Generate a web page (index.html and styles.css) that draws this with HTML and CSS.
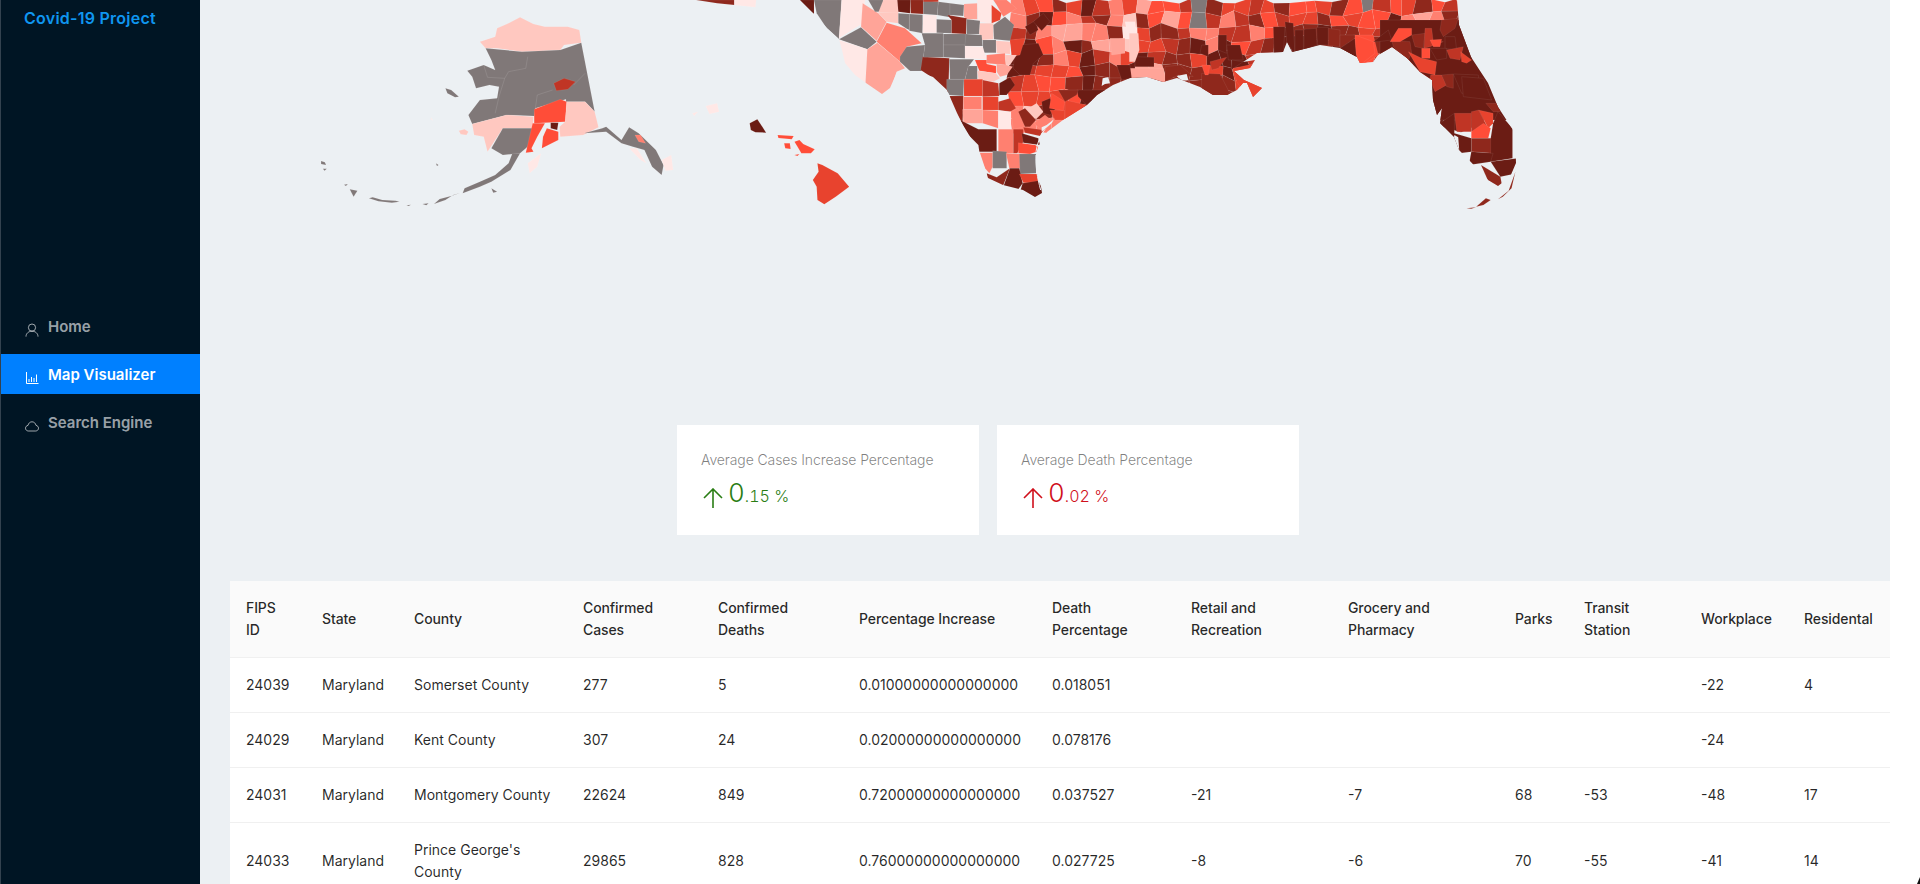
FILE: index.html
```html
<!DOCTYPE html>
<html lang="en">
<head>
<meta charset="utf-8">
<title>Covid-19 Project</title>
<link rel="stylesheet" href="styles.css">
</head>
<body>
<div class="app">
  <aside class="sidebar">
    <div class="logo">Covid-19 Project</div>
    <nav class="menu">
      <a class="menu-item">
        <svg class="menu-icon" viewBox="0 0 14 14"><circle cx="7" cy="4.6" r="3.6"/><path d="M1 13.6C1 10.4 3.6 8.2 7 8.2s6 2.2 6 5.4"/></svg>
        <span>Home</span>
      </a>
      <a class="menu-item active">
        <svg class="menu-icon" viewBox="0 0 14 14"><path d="M1.5 1v11.5H13.500"/><path d="M4 11V8M6.500 11V6M9 11V7M11.500 11V3.500"/></svg>
        <span>Map Visualizer</span>
      </a>
      <a class="menu-item">
        <svg class="menu-icon" viewBox="0 0 14 14"><path d="M3.500 12C1.800 12 .5 10.800.5 9.200.5 7.700 1.600 6.600 3 6.400 3.500 4.200 5 2.800 7 2.800s3.500 1.400 4 3.600c1.400.2 2.500 1.300 2.500 2.800 0 1.600-1.300 2.800-3 2.800z"/></svg>
        <span>Search Engine</span>
      </a>
    </nav>
  </aside>

  <main class="main">
    <svg class="map" viewBox="200 0 1690 424" aria-label="US county map">
      <defs>
        <clipPath id="us-clip">
          <polygon points="800,0 813,13 827,28 839,39 842,50 845,63 855,75 866,83 882,94 890,88 897,72 905,70 922,73 933,77 947,90 950,97 957,113 963,125 978,150 980,153 985,168 988,178 1003,185 1023,190 1035,197 1042,193 1040,180 1036,160 1038,147 1047,132 1063,120 1087,105 1097,95 1113,85 1130,78 1147,77 1163,82 1177,78 1187,82 1200,87 1213,95 1227,95 1237,90 1243,83 1247,83 1253,97 1262,88 1244,80 1234,71 1250,68 1255,60 1243,62 1257,53 1283,52 1287,42 1292,52 1320,45 1340,48 1357,57 1360,63 1373,62 1378,55 1392,47 1407,58 1420,72 1432,80 1433,100 1437,115 1442,108 1440,123 1454,137 1459,150 1469,160 1488,180 1498,186 1510,177 1516,163 1515,133 1498,107 1488,83 1471,57 1459,25 1457,0"/>
        </clipPath>
      </defs>

      <g class="counties" clip-path="url(#us-clip)">
        <g id="county-grid"></g>

        <g transform="translate(790 0) scale(.3333)">
          <polygon class="s-j" points="20,0 72,0 72,42 55,30"/>
          <polygon class="s-g" points="72,0 155,0 147,118 110,85 80,40"/>
          <polygon class="s-a" points="155,0 225,0 218,70 147,115"/>
          <polygon class="s-g" points="147,118 213,82 260,125 232,148"/>
          <polygon class="s-c" points="218,10 265,40 290,65 260,122 213,80"/>
          <polygon class="s-b" points="265,38 325,35 325,70 290,65"/>
          <polygon class="s-d" points="260,125 290,68 345,85 395,130 350,140 345,165 330,185"/>
          <polygon class="s-a" points="140,118 232,148 225,265 195,235 155,195"/>
          <polygon class="s-c" points="232,148 262,128 330,185 345,205 320,215 300,275 275,293 226,255"/>
          <polygon class="s-g" points="330,170 350,140 405,135 395,213 360,213 330,185"/>
          <polygon class="s-i" points="398,170 478,175 475,280 430,235 392,210"/>
          <polygon class="s-g" points="235,0 280,0 280,35 255,35"/>
          <polygon class="s-b" points="280,0 325,0 325,38 265,38"/>
          <polygon class="s-j" points="322,0 362,0 360,40 325,35"/>
          <polygon class="s-i" points="362,0 400,0 400,42 362,40"/>
          <polygon class="s-g" points="400,0 445,5 442,45 400,42"/>
          <polygon class="s-g" points="445,5 480,10 480,52 442,45"/>
          <polygon class="s-g" points="480,10 522,15 520,48 480,45"/>
          <polygon class="s-c" points="522,12 562,10 562,58 530,58 522,50"/>
          <polygon class="s-a" points="562,0 610,0 600,70 565,65"/>
          <polygon class="s-f" points="605,15 635,40 630,60 605,70"/>
          <polygon class="s-d" points="610,0 650,0 680,25 640,50 620,15"/>
          <polygon class="s-h" points="400,0 445,0 445,5 400,5"/>
          <polygon class="s-g" points="325,40 358,42 358,90 348,85 325,70"/>
          <polygon class="s-g" points="358,42 398,44 398,100 358,92"/>
          <polygon class="s-a" points="400,44 440,46 440,98 398,98"/>
          <polygon class="s-g" points="440,58 485,60 485,100 440,98"/>
          <polygon class="s-i" points="472,45 530,55 528,102 485,100 485,60"/>
          <polygon class="s-g" points="530,58 570,62 568,102 530,102"/>
          <polygon class="s-b" points="570,70 610,70 610,118 575,120 568,100"/>
          <polygon class="s-g" points="610,75 645,50 672,75 660,122 612,118"/>
          <polygon class="s-g" points="395,100 460,100 460,172 400,172 405,135"/>
          <polygon class="s-g" points="460,102 528,102 528,135 460,135"/>
          <polygon class="s-g" points="460,135 525,135 525,175 460,172"/>
          <polygon class="s-g" points="528,102 575,105 578,138 525,138"/>
          <polygon class="s-g" points="578,120 618,120 618,158 580,158"/>
          <polygon class="s-a" points="525,138 578,140 590,178 525,175"/>
          <polygon class="s-b" points="618,122 660,125 660,162 620,160"/>
          <polygon class="s-d" points="590,165 645,160 648,195 590,190"/>
          <polygon class="s-e" points="555,180 590,180 590,192 618,198 618,220 568,212"/>
          <polygon class="s-c" points="620,192 650,195 668,200 650,225 630,230 620,215"/>
          <polygon class="s-g" points="478,178 552,178 535,200 525,238 480,238"/>
          <polygon class="s-g" points="535,198 562,198 562,238 525,238"/>
          <polygon class="s-b" points="562,212 618,220 630,235 610,245 565,238"/>
          <polygon class="s-g" points="470,238 522,238 520,288 478,285 470,270"/>
          <polygon class="s-f" points="522,238 578,238 578,288 522,288"/>
          <polygon class="s-h" points="578,240 625,250 628,288 578,290"/>
          <polygon class="s-i" points="478,288 520,288 518,370 495,340"/>
          <polygon class="s-j" points="628,250 660,232 675,255 650,285 628,285"/>
          <polygon class="s-j" points="690,135 745,130 760,165 730,190 720,225 690,225 670,205 672,180"/>
          <polygon class="s-f" points="660,120 705,115 690,165 665,170"/>
          <polygon class="s-b" points="645,165 680,165 660,195 648,195"/>
          <polygon class="s-j" points="705,80 735,62 745,90 720,105"/>
          <polygon class="s-j" points="730,65 760,40 780,65 755,92"/>
        </g>

        <g transform="translate(930 90) scale(.3333)">
          <polygon class="s-d" points="100,20 155,20 155,58 100,58"/>
          <polygon class="s-f" points="158,20 205,20 205,60 158,60"/>
          <polygon class="s-h" points="205,35 240,25 258,55 240,65 205,60"/>
          <polygon class="s-c" points="98,58 158,58 158,100 100,100"/>
          <polygon class="s-d" points="158,60 205,62 205,115 158,100"/>
          <polygon class="s-a" points="205,62 243,65 243,118 205,118"/>
          <polygon class="s-d" points="243,65 265,55 285,110 250,118"/>
          <polygon class="s-j" points="90,90 145,118 200,118 200,185 148,185 145,165 110,130"/>
          <polygon class="s-d" points="205,118 250,118 250,190 205,190"/>
          <polygon class="s-h" points="250,118 280,118 280,155 262,190 250,190"/>
          <polygon class="s-i" points="265,65 285,55 318,90 300,110 285,110"/>
          <polygon class="s-b" points="295,55 320,40 340,65 318,88"/>
          <polygon class="s-d" points="312,100 345,75 370,95 340,125"/>
          <polygon class="s-h" points="280,112 340,120 330,138 285,128"/>
          <polygon class="s-j" points="275,130 325,145 330,165 280,158"/>
          <polygon class="s-e" points="265,158 315,165 325,170 320,185 300,192 265,190"/>
          <polygon class="s-d" points="140,188 188,188 188,230 178,250 165,235"/>
          <polygon class="s-g" points="188,182 230,185 230,235 188,235"/>
          <polygon class="s-d" points="228,190 270,192 270,235 238,235"/>
          <polygon class="s-g" points="268,192 318,192 318,250 270,252"/>
          <polygon class="s-i" points="170,250 200,262 240,235 218,290 170,275"/>
          <polygon class="s-j" points="240,235 268,235 278,280 265,298 220,290"/>
          <polygon class="s-f" points="268,252 322,252 325,280 280,278"/>
          <polygon class="s-j" points="278,280 325,272 345,312 315,330 270,305"/>
          <polygon class="s-j" points="335,35 360,25 378,55 360,75 340,70"/>
          <polygon class="s-f" points="360,60 405,62 402,90 375,90"/>
          <polygon class="s-f" points="405,30 470,45 405,100"/>
          <polygon class="s-e" points="365,10 405,35 400,62 358,55"/>
          <polygon class="s-j" points="440,0 530,0 470,45 445,20"/>
          <polygon class="s-i" points="385,0 445,0 440,15 405,35"/>
          <path class="lagoon" d="M318 195C316 225 322 265 332 300"/>
          <path class="lagoon" d="M345 118C330 135 322 160 318 185"/>
          <polygon class="water" points="335,125 365,100 372,88 350,105 335,112"/>
        </g>

        <g transform="translate(1080 0) scale(.3333)">
          <polygon class="s-c" points="150,205 250,205 260,250 205,232 150,235"/>
          <polygon class="s-j" points="165,170 222,172 222,200 165,200"/>
          <polygon class="s-j" points="110,195 150,195 155,235 125,240"/>
          <polygon class="s-c" points="90,115 135,115 135,160 95,165"/>
          <polygon class="s-a" points="135,65 165,65 170,105 145,115"/>
          <polygon class="s-b" points="148,100 175,100 178,150 165,185 148,185"/>
          <polygon class="s-i" points="365,220 420,222 460,300 400,295 365,265"/>
          <polygon class="s-i" points="255,200 300,195 340,230 295,225 255,245"/>
          <polygon class="s-j" points="415,105 440,105 440,160 415,150"/>
          <polygon class="s-j" points="440,135 480,135 490,180 445,180"/>
          <polygon class="s-j" points="455,180 490,185 460,205 455,210"/>
          <polygon class="s-j" points="365,135 385,135 385,170 360,160"/>
          <polygon class="s-e" points="365,195 390,195 385,225 375,225"/>
          <polygon class="s-h" points="390,185 440,172 415,205 395,210"/>
          <polygon class="s-f" points="460,205 530,190 525,220 560,270 510,300 470,245"/>
          <polygon class="s-j" points="580,80 615,80 610,165 582,160"/>
          <polygon class="s-j" points="615,65 640,70 645,165 620,125"/>
          <polygon class="s-j" points="645,90 670,90 670,150 645,165"/>
          <polygon class="s-j" points="672,88 708,85 712,135 672,150"/>
          <polygon class="s-j" points="710,82 745,82 745,135 712,135"/>
          <polygon class="s-i" points="745,85 780,90 780,140 745,137"/>
          <polygon class="s-j" points="780,130 830,125 830,175 780,140"/>
          <polygon class="s-e" points="820,105 880,105 895,165 840,200 830,170"/>
          <polygon class="water" points="65,258 68,235 85,232 90,250 75,252"/>
          <polygon class="water" points="290,228 320,222 325,240 305,242"/>
        </g>

        <g transform="translate(1340 0) scale(.3333)">
          <rect class="s-j" x="120" y="60" width="390" height="300"/>
          <polygon class="s-i" points="0,105 45,105 45,115 0,145"/>
          <polygon class="s-j" points="0,145 45,115 50,170 25,170"/>
          <polygon class="s-e" points="45,105 100,125 105,160 60,195 48,160"/>
          <polygon class="s-j" points="100,125 145,90 155,120 115,125"/>
          <polygon class="s-i" points="155,120 210,125 215,160 205,180 160,140"/>
          <polygon class="s-e" points="150,125 175,85 215,85 215,105 180,125"/>
          <polygon class="s-i" points="215,105 255,100 250,145 225,140"/>
          <polygon class="s-h" points="255,85 275,85 280,125 310,125 270,140 252,145"/>
          <polygon class="s-e" points="270,120 305,118 300,140 280,140"/>
          <polygon class="s-i" points="305,60 355,55 345,85 310,110 300,90"/>
          <polygon class="s-j" points="315,110 345,110 350,150 315,145"/>
          <polygon class="s-j" points="270,145 320,145 320,175 290,180"/>
          <polygon class="s-e" points="245,145 270,145 270,175 245,175"/>
          <polygon class="s-f" points="205,155 245,175 270,180 290,185 285,225 240,215"/>
          <polygon class="s-h" points="320,150 370,140 360,180 330,175"/>
          <polygon class="s-f" points="362,155 395,180 380,190 365,185"/>
          <polygon class="s-h" points="272,225 305,225 320,255 285,275 270,240"/>
          <polygon class="s-i" points="305,225 340,222 340,265 320,260"/>
          <polygon class="s-j" points="340,222 415,225 420,275 365,280"/>
          <polygon class="s-j" points="365,230 430,235 455,300 370,290"/>
        </g>

        <g transform="translate(800 0) scale(.4847 .3333)">
          <polygon class="s-h" points="1350,340 1385,340 1385,395 1355,395"/>
          <polygon class="s-h" points="1385,335 1400,330 1420,385 1385,395"/>
          <polygon class="s-f" points="1400,330 1430,340 1430,370 1420,385"/>
          <polygon class="s-e" points="1385,395 1410,370 1425,385 1420,415 1385,415"/>
          <polygon class="s-i" points="1385,415 1430,415 1430,460 1385,455"/>
          <polygon class="s-i" points="1415,310 1445,310 1445,335 1430,335"/>
          <polygon class="s-j" points="1440,335 1470,385 1470,475 1425,485 1425,415 1430,370"/>
          <polygon class="s-j" points="1320,370 1350,340 1350,400 1385,415 1385,455 1360,460"/>
          <polygon class="s-j" points="1385,455 1430,460 1425,485 1380,495"/>
          <polygon class="s-i" points="1405,495 1445,530 1450,570 1425,560"/>
          <polygon class="s-j" points="1425,485 1480,475 1480,520 1445,530"/>
          <polygon class="water" points="1350,405 1358,412 1360,450 1348,425"/>
        </g>
      </g>

      <g class="islands" transform="translate(800 0) scale(.4847 .3333)">
        <polygon class="s-i" points="1395,620 1415,595 1425,600 1410,615"/>
        <polygon class="s-i" points="1375,625 1395,622 1385,626"/>
        <polygon class="s-i" points="1440,598 1462,572 1476,515 1468,565 1450,590"/>
      </g>
      <g class="islands" transform="translate(300 0) scale(.3827 .3333)">
        <polygon class="s-i" points="1035,0 1135,0 1135,15 1090,10"/>
        <polygon class="s-a" points="1135,0 1192,0 1190,22 1135,15"/>
        <polygon class="s-b" points="470,125 510,110 515,85 545,70 575,52 610,72 640,80 700,80 730,90 735,128 690,135 680,150 580,155 515,145 485,145"/>
        <polygon class="s-g" points="485,145 580,155 680,150 735,128 770,335 745,305 695,305 695,298 615,325 612,348 540,345 450,372 440,345 470,300 515,295 520,260 495,255 460,265 450,230 437,212 480,195 510,210 500,180"/>
        <polyline class="border" points="480,195 490,232 535,235 520,290 510,340"/>
        <polyline class="border" points="535,235 545,215 590,205 595,170"/>
        <polyline class="border" points="615,325 620,285 660,270"/>
        <polyline class="border" points="715,255 745,220"/>
        <polygon class="s-h" points="663,250 690,235 720,245 700,268 670,272"/>
        <polygon class="s-e" points="612,328 680,298 697,305 693,365 612,370"/>
        <polygon class="s-b" points="697,305 745,305 770,335 780,382 740,405 680,410 678,380 693,365"/>
        <polygon class="s-b" points="450,372 540,345 610,350 608,385 530,385 490,455 480,410 455,405"/>
        <polygon class="s-g" points="530,385 608,385 600,435 575,460 530,465 500,445"/>
        <polygon class="s-e" points="608,370 640,370 620,410 605,445 610,455 590,458"/>
        <polygon class="s-e" points="645,385 675,395 675,420 632,445 635,410"/>
        <polygon class="s-j" points="655,368 675,368 672,390 655,385"/>
        <polygon class="s-a" points="595,490 630,460 620,500 600,520"/>
        <polygon class="s-g" points="575,460 550,510 500,545 470,560 425,580 430,565 470,545 510,525 545,490 555,460"/>
        <polygon class="s-g" points="380,265 395,270 415,290 405,292 385,280"/>
        <polygon class="s-b" points="415,392 430,388 440,395 435,405 420,403"/>
        <polygon class="s-a" points="342,352 348,362 342,358"/>
        <polygon class="s-g" points="420,578 400,585 380,600 350,612 365,597 395,588"/>
        <polygon class="s-g" points="260,605 240,608 205,604 180,595 190,592 215,600 250,602"/>
        <polygon class="s-g" points="55,483 65,487 68,495 55,492"/>
        <polygon class="s-g" points="60,506 70,506 64,512"/>
        <polygon class="s-g" points="115,554 125,552 120,558"/>
        <polygon class="s-g" points="130,568 150,572 140,590"/>
        <polygon class="s-g" points="278,616 290,614 284,618"/>
        <polygon class="s-g" points="320,612 336,610 330,616"/>
        <polygon class="s-g" points="500,565 515,575 505,578"/>
        <polygon class="s-g" points="355,490 362,495 358,498"/>
        <polygon class="s-g" points="742,400 790,385 800,380 810,390 840,420 860,382 885,400 930,450 950,495 945,525 920,500 900,450 870,440 840,430 800,395"/>
        <polygon class="s-d" points="875,405 890,405 903,430 885,425"/>
        <polygon class="s-a" points="860,445 880,445 905,490 890,480"/>
        <polygon class="s-a" points="945,480 970,465 975,510 955,512"/>
        <polygon class="s-a" points="1060,318 1090,310 1095,335 1070,342"/>
        <polygon class="s-a" points="1025,340 1040,335 1030,348"/>
        <polygon class="s-j" points="1175,370 1195,358 1205,375 1218,398 1190,397 1178,390"/>
        <polygon class="s-e" points="1248,405 1290,408 1285,418 1250,414"/>
        <polygon class="s-e" points="1265,430 1280,430 1282,447 1268,445"/>
        <polygon class="s-e" points="1292,425 1305,420 1315,432 1345,448 1335,460 1310,460 1300,440"/>
        <polygon class="s-e" points="1292,465 1305,462 1300,468"/>
        <polygon class="s-f" points="1352,490 1365,495 1405,520 1435,560 1400,590 1370,613 1352,600 1350,560 1340,540 1355,515"/>
      </g>
    </svg>

    <section class="stats">
      <div class="stat-card">
        <div class="stat-title">Average Cases Increase Percentage</div>
        <div class="stat-value up">
          <svg class="stat-arrow" viewBox="0 0 20 20"><path d="M10 20V1M1 10l9-9 9 9"/></svg>
          <span class="stat-int">0</span><span class="stat-dec">.15 %</span>
        </div>
      </div>
      <div class="stat-card">
        <div class="stat-title">Average Death Percentage</div>
        <div class="stat-value down">
          <svg class="stat-arrow" viewBox="0 0 20 20"><path d="M10 20V1M1 10l9-9 9 9"/></svg>
          <span class="stat-int">0</span><span class="stat-dec">.02 %</span>
        </div>
      </div>
    </section>

    <table class="data-table">
      <colgroup>
        <col class="w76"><col class="w92"><col class="w169"><col class="w135"><col class="w141"><col class="w193"><col class="w139"><col class="w157"><col class="w167"><col class="w69"><col class="w117"><col class="w103"><col class="w102">
      </colgroup>
      <thead>
        <tr>
          <th>FIPS ID</th><th>State</th><th>County</th><th>Confirmed Cases</th><th>Confirmed Deaths</th><th>Percentage Increase</th><th>Death Percentage</th><th>Retail and Recreation</th><th>Grocery and Pharmacy</th><th>Parks</th><th>Transit Station</th><th>Workplace</th><th>Residental</th>
        </tr>
      </thead>
      <tbody>
        <tr><td>24039</td><td>Maryland</td><td>Somerset County</td><td>277</td><td>5</td><td>0.01000000000000000</td><td>0.018051</td><td></td><td></td><td></td><td></td><td>-22</td><td>4</td></tr>
        <tr><td>24029</td><td>Maryland</td><td>Kent County</td><td>307</td><td>24</td><td>0.02000000000000000</td><td>0.078176</td><td></td><td></td><td></td><td></td><td>-24</td><td></td></tr>
        <tr><td>24031</td><td>Maryland</td><td>Montgomery County</td><td>22624</td><td>849</td><td>0.72000000000000000</td><td>0.037527</td><td>-21</td><td>-7</td><td>68</td><td>-53</td><td>-48</td><td>17</td></tr>
        <tr><td>24033</td><td>Maryland</td><td>Prince George's County</td><td>29865</td><td>828</td><td>0.76000000000000000</td><td>0.027725</td><td>-8</td><td>-6</td><td>70</td><td>-55</td><td>-41</td><td>14</td></tr>
      </tbody>
    </table>
  </main>
  <svg class="cursor-tip" viewBox="0 0 3 7"><polygon points="0,7 3,0 3,7"/></svg>
</div>
<script src="map.js"></script>
</body>
</html>
```

FILE: styles.css
```css
* { box-sizing: border-box; }

html, body {
  margin: 0;
  height: 884px;
  overflow: hidden;
  background: #fff;
  font-family: Inter, "Liberation Sans", sans-serif;
  font-size: 14px;
  line-height: 22px;
  color: rgba(0, 0, 0, .85);
}

.app {
  position: relative;
  display: flex;
  height: 884px;
  overflow: hidden;
}

/* Sidebar */
.sidebar {
  flex: 0 0 200px;
  background: #001524;
  border-left: 1px solid #33424f;
}

.logo {
  height: 36px;
  line-height: 36px;
  padding-left: 23px;
  margin-bottom: 270px;
  font-size: 16px;
  font-weight: 600;
  letter-spacing: .25px;
  color: #0f96f0;
}

.menu {
  display: flex;
  flex-direction: column;
  gap: 8px;
}

.menu-item {
  display: flex;
  align-items: center;
  gap: 9px;
  height: 40px;
  padding-left: 24px;
  font-size: 15px;
  font-weight: 600;
  line-height: 24px;
  color: rgba(255, 255, 255, .62);
}

.menu-item span {
  margin-top: 1px;
}

.menu-item.active {
  background: #0080ff;
  color: #fff;
}

.menu-icon {
  flex: 0 0 14px;
  width: 14px;
  height: 14px;
  margin-top: 8px;
  fill: none;
  stroke: currentColor;
  stroke-width: 1;
}

/* Main */
.main {
  flex: 0 0 1690px;
  background: #ecf0f3;
}

.map {
  display: block;
  width: 1690px;
  height: 424px;
}

.counties polygon,
.counties rect,
.islands polygon,
.county {
  stroke: #fff;
  stroke-opacity: .15;
  stroke-width: .5px;
  vector-effect: non-scaling-stroke;
}

.counties .water {
  fill: #ecf0f3;
  stroke: none;
}

.lagoon {
  fill: none;
  stroke: #ecf0f3;
  stroke-width: 1px;
  vector-effect: non-scaling-stroke;
}

.border {
  fill: none;
  stroke: #fff;
  stroke-opacity: .18;
  stroke-width: .6px;
  vector-effect: non-scaling-stroke;
}

.s-g { fill: #807878; }
.s-a { fill: #ffe8e6; }
.s-b { fill: #ffc8c0; }
.s-c { fill: #ffa498; }
.s-d { fill: #ff8070; }
.s-e { fill: #ff4d38; }
.s-f { fill: #e8432e; }
.s-h { fill: #c03525; }
.s-i { fill: #8f281c; }
.s-j { fill: #6b1c14; }

/* Statistic cards */
.stats {
  display: flex;
  gap: 18px;
  margin: 1px 0 46px 477px;
}

.stat-card {
  width: 302px;
  height: 110px;
  padding: 24px;
  background: #fff;
}

.stat-title {
  margin-bottom: 4px;
  color: rgba(0, 0, 0, .5);
  font-weight: 300;
  letter-spacing: -.1px;
}

.stat-value {
  display: flex;
  align-items: baseline;
  font-size: 16px;
  line-height: 36px;
  font-weight: 350;
  font-variant-numeric: tabular-nums;
}

.stat-value.up { color: #2a7d14; }
.stat-value.down { color: #d0101c; }

.stat-arrow {
  align-self: center;
  width: 20px;
  height: 20px;
  margin: 7px 5px 0 2px;
  fill: none;
  stroke: currentColor;
  stroke-width: 1.6;
}

.stat-int { font-size: 26px; }

/* Table */
.data-table {
  width: 1660px;
  margin-left: 30px;
  table-layout: fixed;
  border-collapse: collapse;
  background: #fff;
}

.data-table th,
.data-table td {
  padding: 16px;
  border-bottom: 1px solid #f0f0f0;
  text-align: left;
  vertical-align: middle;
}

.data-table th {
  background: #fafafa;
  font-weight: 450;
  letter-spacing: -.1px;
}

.w76 { width: 76px; }
.w92 { width: 92px; }
.w169 { width: 169px; }
.w135 { width: 135px; }
.w141 { width: 141px; }
.w193 { width: 193px; }
.w139 { width: 139px; }
.w157 { width: 157px; }
.w167 { width: 167px; }
.w69 { width: 69px; }
.w117 { width: 117px; }
.w102 { width: 102px; }
.w103 { width: 103px; }

.cursor-tip {
  position: absolute;
  right: 0;
  bottom: 0;
  width: 3px;
  height: 7px;
  fill: #111;
}
```

FILE: map.js
```js
// County mosaic for the dense south-eastern part of the map. Each letter is the
// shade of one county; vertices are jittered with a fixed seed so it is stable.
(function () {
  var X0 = 1010, W = 14, H = 13, JIT = 3.5;
  var rows = [
    "dfeif" + "jhdfceehgiffhfieefieg" + "hefiehe",
    "dijed" + "hidbiecegh" + "dhiehffiefe" + "ejdcdii",
    "hidcc" + "ddiafiihddhhdejiijiif" + "hhjhhij",
    "fjedj" + "iccbffhijdjehijjjijje" + "ifeihjj",
    "jjidf" + "jhdfjhiifjjjhhhjjjije" + "hhhffjj",
    "jhffe" + "jiijcciiifjffeeeeeeee" + "ffffjjj",
    "hfeei" + "jiiiiiiiiiiffffffffff" + "ffffjjj",
    "efffe" + "jiiiiiiiiiiffffffffff" + "ffffjjj",
    "dbiff" + "iiiiiiiiiiiffffffffff" + "ffffjjj",
    "ddddf" + "iiiiiiiiiiiffffffffff" + "ffffjjj"
  ];
  var seed = 20200;
  function rnd() {
    seed = (seed * 9301 + 49297) % 233280;
    return seed / 233280 * 2 - 1;
  }
  var cols = rows[0].length, verts = [], r, c;
  for (r = 0; r <= rows.length; r++) {
    verts.push([]);
    for (c = 0; c <= cols; c++) {
      verts[r].push([X0 + c * W + rnd() * JIT, (r * H) + rnd() * JIT]);
    }
  }
  var NS = "http://www.w3.org/2000/svg";
  var host = document.getElementById("county-grid");
  for (r = 0; r < rows.length; r++) {
    for (c = 0; c < cols; c++) {
      var p = document.createElementNS(NS, "polygon");
      var q = [verts[r][c], verts[r][c + 1], verts[r + 1][c + 1], verts[r + 1][c]];
      p.setAttribute("points", q.map(function (v) { return v[0].toFixed(1) + "," + v[1].toFixed(1); }).join(" "));
      p.setAttribute("class", "county s-" + rows[r].charAt(c));
      host.appendChild(p);
    }
  }
})();
```
